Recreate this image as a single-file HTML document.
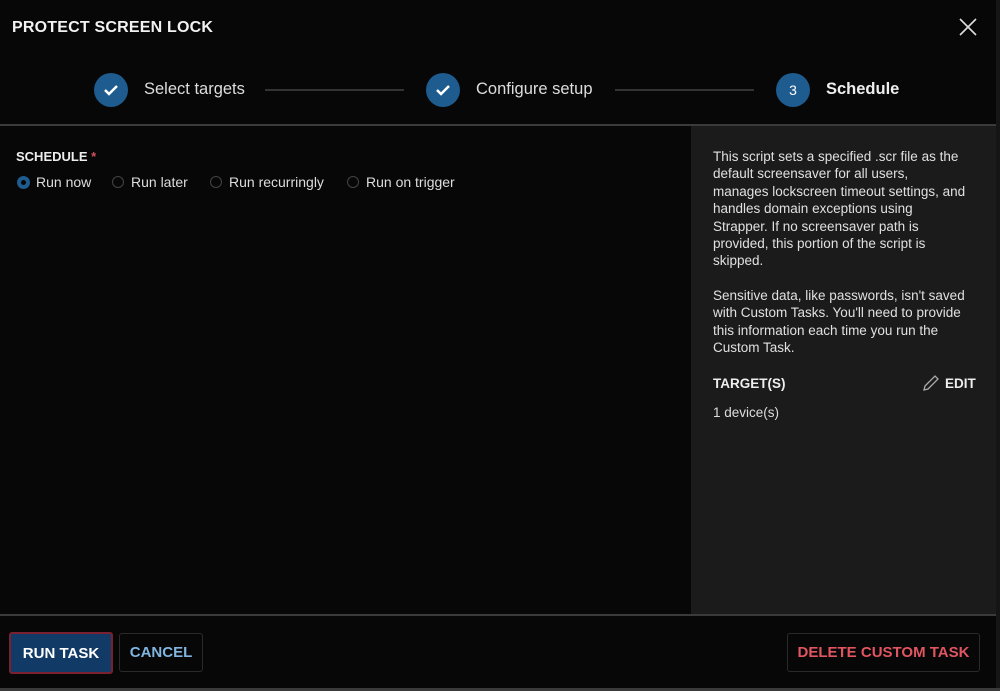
<!DOCTYPE html><html><head><style>
body{margin:0;width:1000px;height:691px;background:#070707;font-family:"Liberation Sans",sans-serif;color:#e6e6e6;position:relative;overflow:hidden}
.a{position:absolute}
.t{font-weight:bold;font-size:16px;color:#f2f2f2}
.circ{width:34px;height:34px;border-radius:50%;background:#1e5b8e;display:flex;align-items:center;justify-content:center;color:#fff;font-size:14px}
.step{font-size:16.5px;color:#ddd}
.ln{height:2px;background:#333}
.rad{width:12px;height:12px;border-radius:50%;border:1px solid #444;box-sizing:border-box}
.rl{font-size:14px;color:#ddd}
p{margin:0}
</style></head><body>
<div class="a t" style="left:12px;top:19px;letter-spacing:0.2px">PROTECT SCREEN LOCK</div>
<svg class="a" style="left:959px;top:18px" width="18" height="18"><path d="M1 1L17 17M17 1L1 17" stroke="#ddd" stroke-width="1.6"/></svg>
<div class="a circ" style="left:94px;top:73px"><svg width="16" height="14"><path d="M2 7L6 11L14 3" stroke="#fff" stroke-width="2.5" fill="none"/></svg></div>
<div class="a step" style="left:144px;top:80px">Select targets</div>
<div class="a ln" style="left:265px;top:89px;width:139px"></div>
<div class="a circ" style="left:426px;top:73px"><svg width="16" height="14"><path d="M2 7L6 11L14 3" stroke="#fff" stroke-width="2.5" fill="none"/></svg></div>
<div class="a step" style="left:476px;top:80px">Configure setup</div>
<div class="a ln" style="left:615px;top:89px;width:139px"></div>
<div class="a circ" style="left:776px;top:73px">3</div>
<div class="a step" style="left:826px;top:80px;font-weight:bold;color:#eee">Schedule</div>
<div class="a" style="left:0;top:124px;width:996px;height:2px;background:#3a3a3a"></div>
<div class="a" style="left:996px;top:0;width:4px;height:691px;background:#151515"></div>
<div class="a" style="left:691px;top:126px;width:305px;height:488px;background:#1b1b1b"></div>
<div class="a" style="left:16px;top:149px;font-size:13px;font-weight:bold;color:#eee">SCHEDULE <span style="color:#d0505a">*</span></div>
<div class="a" style="left:17px;top:176px;width:13px;height:13px;border-radius:50%;background:#1e5b8e;display:flex;align-items:center;justify-content:center"><div style="width:5px;height:5px;border-radius:50%;background:#070707"></div></div>
<div class="a rl" style="left:36px;top:174px">Run now</div>
<div class="a rad" style="left:112px;top:176px"></div><div class="a rl" style="left:131px;top:174px">Run later</div>
<div class="a rad" style="left:210px;top:176px"></div><div class="a rl" style="left:229px;top:174px">Run recurringly</div>
<div class="a rad" style="left:347px;top:176px"></div><div class="a rl" style="left:366px;top:174px">Run on trigger</div>
<div class="a" style="left:713px;top:148px;width:280px;font-size:13.5px;line-height:17.4px;color:#e0e0e0;white-space:nowrap">
<p>This script sets a specified .scr file as the<br>default screensaver for all users,<br>manages lockscreen timeout settings, and<br>handles domain exceptions using<br>Strapper. If no screensaver path is<br>provided, this portion of the script is<br>skipped.</p><p style="margin-top:17px">Sensitive data, like passwords, isn't saved<br>with Custom Tasks. You'll need to provide<br>this information each time you run the<br>Custom Task.</p></div>
<div class="a" style="left:713px;top:376px;font-size:13.5px;font-weight:bold;color:#eee">TARGET(S)</div>
<svg class="a" style="left:921px;top:374px" width="20" height="18"><path d="M3 16L4 12L14 2L17 5L7 15Z" stroke="#aaa" stroke-width="1.3" fill="none"/></svg>
<div class="a" style="left:945px;top:376px;font-size:13.5px;font-weight:bold;color:#eee">EDIT</div>
<div class="a" style="left:713px;top:405px;font-size:13.5px;color:#ddd">1 device(s)</div>
<div class="a" style="left:0;top:614px;width:996px;height:2px;background:#3a3a3a"></div>
<div class="a" style="left:9px;top:632px;width:104px;height:42px;box-sizing:border-box;border:2px solid #7a2030;border-radius:3px;background:#113a66;color:#fff;font-size:15px;font-weight:bold;display:flex;align-items:center;justify-content:center">RUN TASK</div>
<div class="a" style="left:119px;top:633px;width:84px;height:39px;box-sizing:border-box;border:1px solid #2a2a2a;border-radius:3px;color:#7fb5e0;font-size:15px;font-weight:bold;display:flex;align-items:center;justify-content:center">CANCEL</div>
<div class="a" style="left:787px;top:633px;width:193px;height:39px;box-sizing:border-box;border:1px solid #2a2a2a;border-radius:3px;color:#e05560;font-size:15px;font-weight:bold;display:flex;align-items:center;justify-content:center">DELETE CUSTOM TASK</div>
<div class="a" style="left:0;top:688px;width:1000px;height:3px;background:#3a3a3a"></div>
</body></html>
